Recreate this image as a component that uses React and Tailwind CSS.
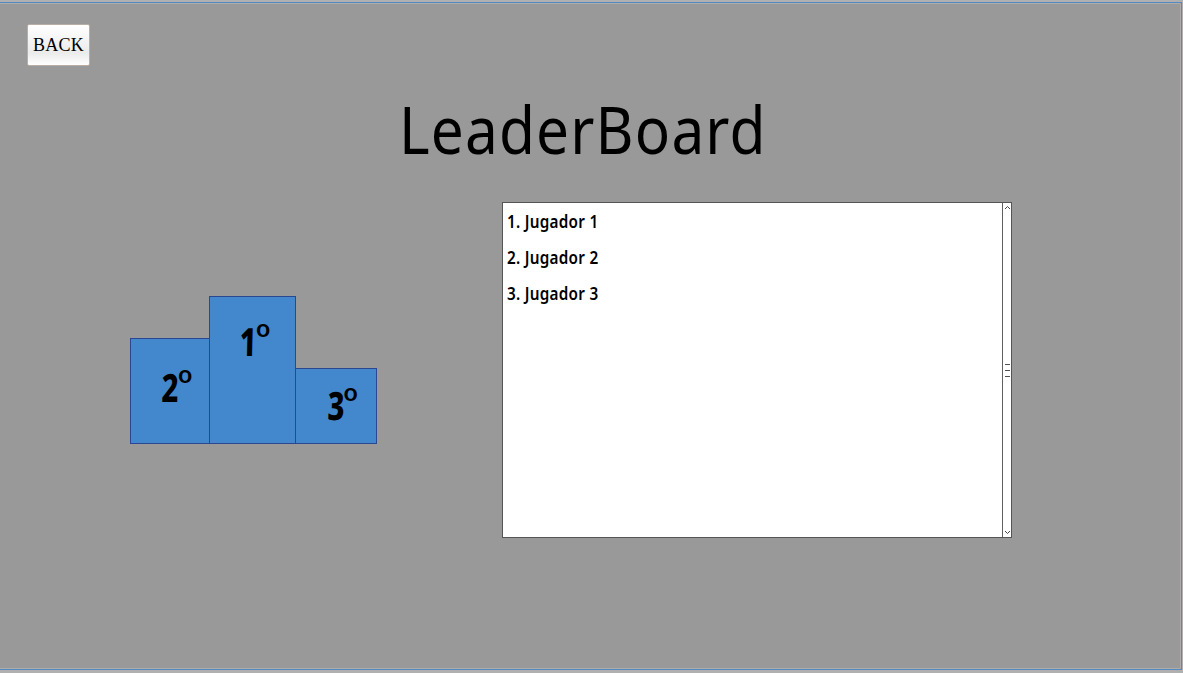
const players = ["Jugador 1", "Jugador 2", "Jugador 3"];

function Place({ n, className }) {
  return (
    <div className={`flex justify-center border border-[#2b4792] bg-[#4388cd] font-['Noto_Sans',sans-serif] text-black ${className}`}>
      <span className="flex items-start leading-none">
        <span className="origin-right scale-x-[0.75] -skew-x-2 text-[39px] leading-[36px] font-extrabold">{n}</span>
        <span className="-mt-[7px] -ml-px text-[24px] leading-[24px] font-semibold">o</span>
      </span>
    </div>
  );
}

function ScrollBar() {
  return (
    <div className="flex w-[9px] flex-col items-center justify-between border-l border-[#606060] py-[2px]">
      <svg width="7" height="5" viewBox="0 0 7 5" fill="none" stroke="#444" strokeWidth="1">
        <path d="M1 4 L3.5 1.5 L6 4" />
      </svg>
      <div className="flex flex-col gap-[5px]">
        <div className="h-px w-[5px] bg-[#505050]" />
        <div className="h-px w-[5px] bg-[#505050]" />
        <div className="h-px w-[5px] bg-[#505050]" />
      </div>
      <svg width="7" height="5" viewBox="0 0 7 5" fill="none" stroke="#444" strokeWidth="1">
        <path d="M1 1 L3.5 3.5 L6 1" />
      </svg>
    </div>
  );
}

export default function App() {
  return (
    <div className="h-[673px] w-[1183px] overflow-hidden bg-[#b0b0b0] pt-[2px] pr-px pb-[3px]">
      <div className="h-full border-t border-r border-b border-[#558abf]">
        <div className="flex h-full flex-col border-t border-r border-b border-[#acacac] bg-[#999999] pt-5">
          <button className="ml-[27px] flex h-[42px] w-[63px] items-center justify-center rounded-[2px] border border-[#b9aea5] bg-linear-to-b from-white via-[#ebebeb] via-70% to-white font-['Liberation_Serif',serif] text-[18px] tracking-[0.3px] text-black">
            BACK
          </button>
          <h1 className="mt-[21px] ml-[399px] w-[410px] origin-left scale-x-[0.9] font-['Noto_Sans',sans-serif] text-[65px] leading-[84px] tracking-[1.3px] whitespace-nowrap text-black">
            LeaderBoard
          </h1>
          <div className="mt-[31px] flex">
            <div className="mt-[94px] ml-[130px] flex h-[148px] w-[247px] items-end">
              <Place n="2" className="h-[106px] w-[79px] border-r-0 pt-[30px] pl-[9px]" />
              <Place n="1" className="h-[148px] w-[87px] pt-[26px]" />
              <Place n="3" className="-ml-px h-[76px] w-[82px] pt-[18px] pl-[8px]" />
            </div>
            <div className="ml-[125px] flex h-[336px] w-[510px] border border-[#555555] bg-white">
              <ol className="flex-1 pl-1">
                {players.map((p, i) => (
                  <li key={p} className="h-9 origin-left scale-x-[0.85] font-['Noto_Sans',sans-serif] text-[18px] leading-9 font-semibold tracking-[0.3px] text-black">
                    {i + 1}. {p}
                  </li>
                ))}
              </ol>
              <ScrollBar />
            </div>
          </div>
        </div>
      </div>
    </div>
  );
}
